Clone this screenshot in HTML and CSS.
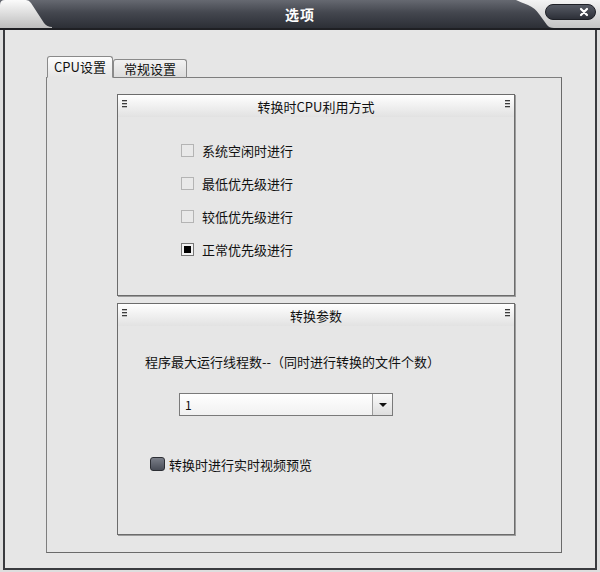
FILE: index.html
```html
<!DOCTYPE html>
<html lang="zh-CN">
<head>
  <meta charset="UTF-8" />
  <meta name="viewport" content="width=device-width, initial-scale=1.0"/>
  <title>选项</title>
  <link rel="stylesheet" href="styles.css">
</head>
<body>

<div class="window">
  <div class="titlebar">
    <svg class="corner-left" width="52" height="28" viewBox="0 0 52 28">
      <defs>
        <linearGradient id="lightL" x1="0" y1="0" x2="0" y2="1">
          <stop offset="0" stop-color="#fbfbfb"/>
          <stop offset="1" stop-color="#bdbdbd"/>
        </linearGradient>
      </defs>
      <path d="M0 28 V5 Q0 0 5 0 H26 Q29 0 31 3 L44 23 Q47 27 52 27 V28 Z" fill="url(#lightL)"/>
    </svg>
    <span class="title">选项</span>
    <svg class="corner-right" width="90" height="28" viewBox="0 0 90 28">
      <defs>
        <linearGradient id="lightR" x1="0" y1="0" x2="0" y2="1">
          <stop offset="0" stop-color="#f4f4f4"/>
          <stop offset="1" stop-color="#c4c4c4"/>
        </linearGradient>
        <linearGradient id="pill" x1="0" y1="0" x2="0" y2="1">
          <stop offset="0" stop-color="#585c66"/>
          <stop offset="1" stop-color="#2b2e36"/>
        </linearGradient>
      </defs>
      <path d="M6 0 H90 V28 H44 Q39 28 37 25 L29 14 Q25 8 18 5 Q10 2 6 0 Z" fill="url(#lightR)"/>
      <rect x="35.5" y="4.5" width="50" height="15" rx="7.5" fill="url(#pill)" stroke="#1e2026"/>
      <path d="M71 9 L77 15 M77 9 L71 15" stroke="#fff" stroke-width="2.2" stroke-linecap="round"/>
    </svg>
  </div>

  <div class="content">
    <div class="tabs">
      <div class="tab active">CPU设置</div>
      <div class="tab">常规设置</div>
    </div>

    <div class="tab-panel">
      <div class="group group-cpu">
        <div class="group-head">
          <i class="grip"></i>
          <span class="group-title">转换时CPU利用方式</span>
          <i class="grip"></i>
        </div>
        <ul class="options">
          <li><span class="check"></span>系统空闲时进行</li>
          <li><span class="check"></span>最低优先级进行</li>
          <li><span class="check"></span>较低优先级进行</li>
          <li><span class="check checked"></span>正常优先级进行</li>
        </ul>
      </div>

      <div class="group group-params">
        <div class="group-head">
          <i class="grip"></i>
          <span class="group-title">转换参数</span>
          <i class="grip"></i>
        </div>
        <p class="param-label">程序最大运行线程数--（同时进行转换的文件个数）</p>
        <div class="combo">
          <span class="combo-value">1</span>
          <span class="combo-btn"></span>
        </div>
        <label class="preview"><span class="check dark"></span>转换时进行实时视频预览</label>
      </div>
    </div>
  </div>
</div>

</body>
</html>
```

FILE: styles.css
```css
body {
  margin: 0;
  width: 600px;
  height: 572px;
  overflow: hidden;
  background-color: #dedede;
  font-family: "Noto Sans CJK SC", "Microsoft YaHei", sans-serif;
  font-size: 13px;
  color: #111;
}
.window {
  height: 572px;
}
.titlebar {
  position: relative;
  height: 28px;
  border-bottom: 2px solid #1f2024;
  background: linear-gradient(#666971, #44474f 45%, #2c2f36);
  display: flex;
  justify-content: center;
  align-items: center;
}
.title {
  color: #fff;
  font-weight: bold;
  font-size: 14px;
  letter-spacing: 1px;
}
.corner-left {
  position: absolute;
  left: 0;
  top: 0;
}
.corner-right {
  position: absolute;
  left: 510px;
  top: 0;
}
.content {
  margin: 0 3px;
  height: 540px;
  box-sizing: border-box;
  border: 2px solid #3a3b3f;
  border-top: 0;
  background-color: #e6e6e6;
  padding: 26px 0 0 41px;
}
.tabs {
  display: flex;
  align-items: flex-end;
  padding-left: 1px;
  position: relative;
  z-index: 1;
  margin-bottom: -1px;
}
.tab {
  box-sizing: border-box;
  width: 74px;
  height: 19px;
  border: 1px solid #8a8a8a;
  border-bottom-color: #7e7e7e;
  border-radius: 3px 3px 0 0;
  background: linear-gradient(#f2f2f2, #dcdcdc);
  text-align: center;
  line-height: 17px;
}
.tab.active {
  width: 66px;
  height: 22px;
  line-height: 20px;
  border-bottom-color: #e6e6e6;
  background: linear-gradient(#fdfdfd, #e6e6e6);
}
.tab-panel {
  width: 516px;
  height: 476px;
  box-sizing: border-box;
  border: 1px solid #7e7e7e;
  border-right-color: #6a6a6a;
  border-bottom-color: #6a6a6a;
  padding: 16px 0 0 70px;
}
.group {
  width: 398px;
  box-sizing: border-box;
  border: 1px solid #6c6c6c;
  box-shadow: 1px 1px 0 #9c9c9c;
}
.group-cpu {
  height: 202px;
}
.group-params {
  height: 232px;
  margin-top: 7px;
}
.group-head {
  height: 22px;
  display: flex;
  align-items: center;
  padding: 0 4px;
  background: linear-gradient(#ffffff, #f3f3f3 40%, #e2e2e2);
}
.group-title {
  flex: 1;
  text-align: center;
}
.grip {
  width: 5px;
  height: 9px;
  margin-top: -3px;
  background: linear-gradient(#3c3c3c 0 1px, #bbb 1px 2px, transparent 2px 3px, #3c3c3c 3px 4px, #bbb 4px 5px, transparent 5px 6px, #3c3c3c 6px 7px, #bbb 7px 8px, transparent 8px);
}
.options {
  list-style: none;
  margin: 17px 0 0;
  padding: 0 0 0 63px;
}
.options li {
  height: 33px;
  display: flex;
  align-items: center;
}
.check {
  width: 13px;
  height: 13px;
  box-sizing: border-box;
  border: 1px solid #b4b4b4;
  background-color: #e9e9e9;
  margin-right: 8px;
  display: flex;
  justify-content: center;
  align-items: center;
}
.check.checked {
  border-color: #777;
  background-color: #f2f2f2;
}
.check.checked::after {
  content: "";
  width: 7px;
  height: 7px;
  background-color: #000;
}
.check.dark {
  width: 15px;
  height: 14px;
  border: 1px solid #2c2e34;
  border-radius: 3px;
  background: linear-gradient(#7a7e88, #4a4e58);
  margin-right: 4px;
}
.param-label {
  margin: 27px 0 0 27px;
  line-height: 18px;
}
.combo {
  margin: 22px 0 0 61px;
  width: 214px;
  height: 23px;
  box-sizing: border-box;
  border: 1px solid #7a7a7a;
  display: flex;
  background: linear-gradient(#ffffff, #f1f1f1);
}
.combo-value {
  flex: 1;
  padding-left: 5px;
  font-size: 12px;
  line-height: 21px;
}
.combo-btn {
  width: 19px;
  border-left: 1px solid #9a9a9a;
  background: linear-gradient(#fafafa, #dedede);
  display: flex;
  justify-content: center;
  align-items: center;
}
.combo-btn::after {
  content: "";
  border-left: 4px solid transparent;
  border-right: 4px solid transparent;
  border-top: 4px solid #111;
}
.preview {
  margin: 38px 0 0 32px;
  height: 20px;
  display: flex;
  align-items: center;
}
```
